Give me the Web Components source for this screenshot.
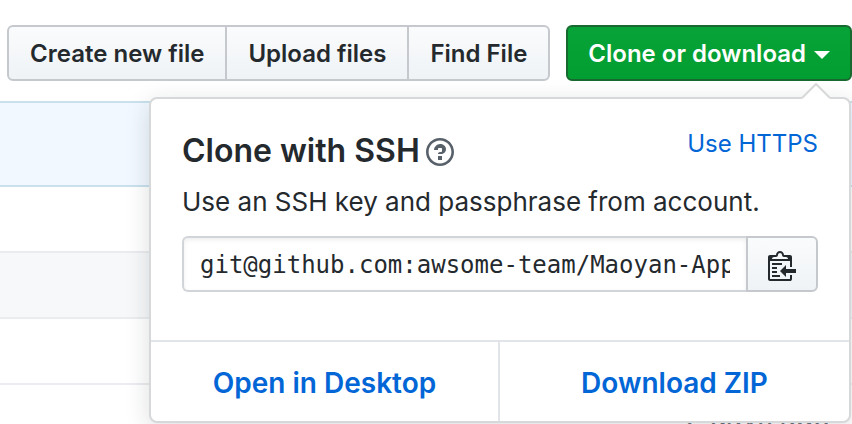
<!DOCTYPE html>
<html lang="en">
<head>
<meta charset="utf-8">
<title>Clone or download</title>
<style>
  body {
    margin: 0;
    height: 100vh;
    overflow: hidden;
    background: #fff;
    color: #24292e;
    font-family: Inter, "Liberation Sans", sans-serif;
    font-size: 24px;
    line-height: 36px;
  }
</style>
</head>
<body>
<repo-page></repo-page>

<script>
  const define = (name, html) => {
    const template = document.createElement('template');
    template.innerHTML = html;
    customElements.define(name, class extends HTMLElement {
      constructor() {
        super();
        this.attachShadow({ mode: 'open' }).append(template.content.cloneNode(true));
      }
    });
  };

  define('action-button', `
    <style>
      :host { display: block; }
      button {
        display: block;
        width: 100%;
        box-sizing: border-box;
        padding: 9px var(--pad, 21px) 7px;
        border: 2px solid var(--edge, #c5c9ce);
        border-radius: var(--radius, 6px);
        background: var(--fill, linear-gradient(#fafbfc, #eff3f6));
        color: inherit;
        font: 600 24px/36px Inter, "Liberation Sans", sans-serif;
        white-space: nowrap;
        cursor: pointer;
      }
    </style>
    <button type="button"><slot></slot></button>`);

  define('button-group', `
    <style>
      :host { display: flex; }
      ::slotted(*) { --radius: 0; }
      ::slotted(:first-child) { --radius: 6px 0 0 6px; }
      ::slotted(:last-child) { --radius: 0 6px 6px 0; }
      ::slotted(:not(:first-child)) { margin-left: -2px; }
    </style>
    <slot></slot>`);

  define('file-row', `
    <style>
      :host {
        display: flex;
        justify-content: flex-end;
        box-sizing: border-box;
        min-height: 66px;
        padding: 14px 22px 14px 20px;
        border-bottom: 2px solid #eaecef;
        color: #6a737d;
        font-size: 28px;
      }
      :host([shaded]) { background: #f6f8fa; }
      :host([tease]) {
        min-height: 86px;
        background: #f1f8ff;
        border-top: 2px solid #c8e1ed;
        border-bottom-color: #c8e1ed;
      }
    </style>
    <slot></slot>`);

  define('help-icon', `
    <style>
      :host { display: block; }
      a { display: block; padding-top: 2px; color: #586069; }
      svg { display: block; }
    </style>
    <a href="#help" aria-label="Which remote URL should I use?">
      <svg width="28" height="32" viewBox="0 0 14 16" fill="currentColor" aria-hidden="true"><path fill-rule="evenodd" d="M6 10h2v2H6v-2zm4-3.5C10 8.64 8 9 8 9H6c0-.55.45-1 1-1h.5c.28 0 .5-.22.5-.5v-1c0-.28-.22-.5-.5-.5h-1c-.28 0-.5.22-.5.5V7H4c0-1.5 1.5-3 3-3s3 1 3 2.5zM7 2.3c3.14 0 5.7 2.56 5.7 5.7s-2.56 5.7-5.7 5.7A5.71 5.71 0 0 1 1.3 8c0-3.14 2.56-5.7 5.7-5.7zM7 1C3.14 1 0 4.14 0 8s3.14 7 7 7 7-3.14 7-7-3.14-7-7-7z"/></svg>
    </a>`);

  define('clone-url', `
    <style>
      :host { display: flex; }
      input {
        flex: 1;
        min-width: 0;
        box-sizing: border-box;
        height: 56px;
        padding: 2px 16px 0;
        border: 2px solid #d1d5da;
        border-right: 0;
        border-radius: 6px 0 0 6px;
        background: #fff;
        box-shadow: inset 0 2px 4px rgba(27, 31, 35, .075);
        color: #24292e;
        font: 24px/36px "DejaVu Sans Mono", monospace;
        outline: 0;
      }
      button {
        display: grid;
        place-items: center;
        width: 72px;
        padding: 2px 0 0;
        border: 2px solid #c5c9ce;
        border-radius: 0 6px 6px 0;
        background: linear-gradient(#fafbfc, #eff3f6);
        color: #24292e;
      }
    </style>
    <input type="text" readonly aria-label="Clone this repository" value="git@github.com:awsome-team/Maoyan-App.git">
    <button type="button" aria-label="Copy to clipboard">
      <svg width="28" height="32" viewBox="0 0 14 16" fill="currentColor" aria-hidden="true"><path fill-rule="evenodd" d="M2 13h4v1H2v-1zm5-6H2v1h5V7zm2 3V8l-3 3 3 3v-2h5v-2H9zM4.5 9H2v1h2.500V9zM2 12h2.500v-1H2v1zm9 1h1v2c-.02.28-.11.52-.3.7-.19.18-.42.28-.7.3H1c-.55 0-1-.45-1-1V4c0-.55.45-1 1-1h3c0-1.110.890-2 2-2 1.110 0 2 .890 2 2h3c.55 0 1 .45 1 1v5h-1V6H1v9h10v-2zM2 5h8c0-.55-.45-1-1-1H8c-.55 0-1-.45-1-1s-.45-1-1-1-1 .45-1 1-.45 1-1 1H3c-.55 0-1 .45-1 1z"/></svg>
    </button>`);

  define('clone-popover', `
    <style>
      :host {
        display: block;
        box-sizing: border-box;
        border: 2px solid #d6d8da;
        border-radius: 8px;
        background: #fff;
        box-shadow: 0 6px 24px rgba(27, 31, 35, .15);
      }
      .caret { position: absolute; right: 18px; bottom: 100%; display: block; margin-bottom: -2px; }
      .body { padding: 30px 31px 48px; }
      .head { display: flex; justify-content: space-between; align-items: flex-start; }
      .title { display: flex; align-items: center; gap: 6px; }
      h4 { margin: 0; font-size: 32px; line-height: 44px; font-weight: 600; }
      a { color: #0366d6; text-decoration: none; }
      .head > a { line-height: 30px; }
      p { margin: 11px 0 16px; font-size: 26px; line-height: 36px; white-space: nowrap; }
      .links { display: grid; grid-template-columns: 1fr 1fr; border-top: 2px solid #e1e4e8; }
      .links a { padding: 23px 0 20px; text-align: center; font-size: 28px; font-weight: 600; }
      .links a:first-child { border-right: 2px solid #e1e4e8; }
    </style>
    <svg class="caret" width="30" height="18" viewBox="0 0 30 18" aria-hidden="true"><path d="M1 15L15 1l14 14v3H1z" fill="#fff"/><path d="M1 15L15 1l14 14" fill="none" stroke="#d6d8da" stroke-width="2"/></svg>
    <div class="body">
      <div class="head">
        <div class="title"><h4>Clone with SSH</h4><help-icon></help-icon></div>
        <a href="#https">Use HTTPS</a>
      </div>
      <p>Use an SSH key and passphrase from account.</p>
      <clone-url></clone-url>
    </div>
    <div class="links">
      <a href="#desktop">Open in Desktop</a>
      <a href="#zip">Download ZIP</a>
    </div>`);

  define('repo-page', `
    <style>
      :host { display: block; }
      .toolbar {
        position: relative;
        display: flex;
        justify-content: flex-end;
        gap: 16px;
        padding: 25px 0 20px 7px;
      }
      .clone { --pad: 20px; --edge: #17692f; --fill: linear-gradient(#07a338, #039e31); color: #fff; }
      .arrow {
        display: inline-block;
        vertical-align: middle;
        margin-left: 8px;
        border: 8px solid transparent;
        border-top-color: currentColor;
        border-bottom: 0;
      }
      clone-popover {
        position: absolute;
        top: 97px;
        right: 1px;
        width: 702px;
        max-width: 100%;
      }
    </style>
    <div class="toolbar">
      <button-group>
        <action-button>Create new file</action-button>
        <action-button>Upload files</action-button>
        <action-button>Find File</action-button>
      </button-group>
      <action-button class="clone">Clone or download<span class="arrow"></span></action-button>
      <clone-popover></clone-popover>
    </div>
    <file-row tease></file-row>
    <file-row></file-row>
    <file-row shaded></file-row>
    <file-row></file-row>
    <file-row>2 days ago</file-row>`);
</script>
</body>
</html>
